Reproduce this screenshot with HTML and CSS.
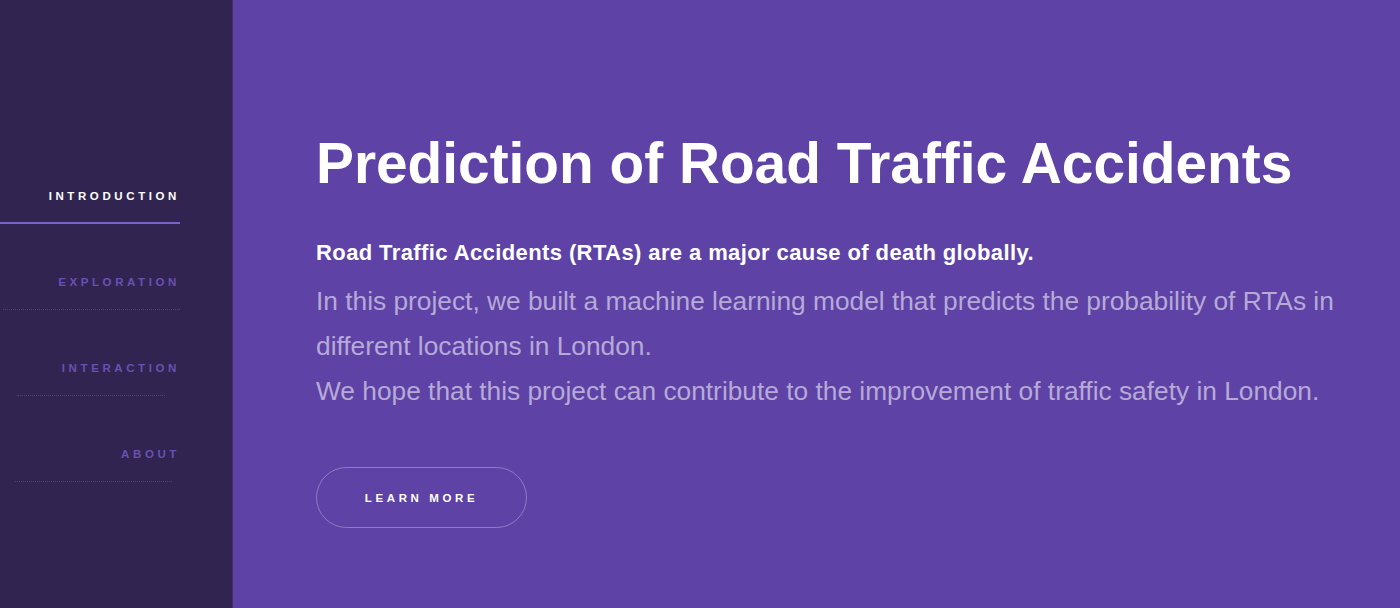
FILE: index.html
```html
<!DOCTYPE html>
<html>
<head>
<meta charset="utf-8">
<link rel="stylesheet" href="styles.css">
</head>
<body>
<div class="page">
  <nav class="sidebar">
    <ul class="nav">
      <li class="nav-item active"><a href="#">Introduction</a><span class="line line-active"></span></li>
      <li class="nav-item"><a href="#">Exploration</a><span class="line line-a"></span></li>
      <li class="nav-item"><a href="#">Interaction</a><span class="line line-b"></span></li>
      <li class="nav-item"><a href="#">About</a><span class="line line-c"></span></li>
    </ul>
  </nav>
  <main class="main">
    <h1 class="title">Prediction of Road Traffic Accidents</h1>
    <p class="lead">Road Traffic Accidents (RTAs) are a major cause of death globally.</p>
    <p class="body">In this project, we built a machine learning model that predicts the probability of RTAs in different locations in London.<br>We hope that this project can contribute to the improvement of traffic safety in London.</p>
    <a class="button" href="#">Learn More</a>
  </main>
</div>
</body>
</html>
```
FILE: styles.css
```css
html, body {
  margin: 0;
  padding: 0;
  height: 100%;
}
body {
  font-family: "Liberation Sans", Arial, sans-serif;
  background: #5e42a6;
}
.page {
  display: flex;
  height: 608px;
}
.sidebar {
  width: 233px;
  background: #312450;
  border-right: 1px solid #3f2f6e;
  box-sizing: border-box;
  flex-shrink: 0;
}
.nav {
  list-style: none;
  margin: 0;
  padding: 190px 0 0 0;
  width: 180px;
}
.nav-item {
  display: flex;
  flex-direction: column;
  align-items: flex-end;
  height: 86px;
}
.nav-item a {
  display: block;
  font-size: 11.5px;
  font-weight: bold;
  letter-spacing: 3.6px;
  text-transform: uppercase;
  text-decoration: none;
  color: #6a50b4;
  line-height: 12px;
}
.nav-item.active a {
  color: #ffffff;
}
.line {
  display: block;
  height: 1px;
  margin-top: 21px;
  align-self: flex-start;
  border-top: 1px dotted rgba(110, 82, 190, 0.55);
}
.line-active {
  width: 180px;
  height: 2px;
  border: none;
  background: #7c62c4;
  margin-top: 20px;
}
.line-a {
  margin-left: 3px;
  width: 177px;
}
.line-b {
  margin-left: 17px;
  width: 148px;
}
.line-c {
  margin-left: 15px;
  width: 157px;
}
.main {
  flex: 1;
  padding: 132px 0 0 83px;
  color: #ffffff;
}
.title {
  margin: 0;
  font-size: 56.8px;
  font-weight: bold;
  line-height: 64px;
}
.lead {
  margin: 45px 0 0 0;
  font-size: 22px;
  font-weight: bold;
  line-height: 24px;
  letter-spacing: 0.4px;
}
.body {
  margin: 14px 0 0 0;
  font-size: 26.3px;
  line-height: 45px;
  color: #b6aad7;
}
.button {
  display: flex;
  align-items: center;
  justify-content: center;
  margin-top: 53px;
  width: 211px;
  height: 61px;
  box-sizing: border-box;
  border: 1px solid rgba(255, 255, 255, 0.3);
  border-radius: 31px;
  color: #ffffff;
  text-decoration: none;
  font-size: 11.5px;
  font-weight: bold;
  letter-spacing: 3.6px;
  text-transform: uppercase;
  padding-left: 0;
}
```
